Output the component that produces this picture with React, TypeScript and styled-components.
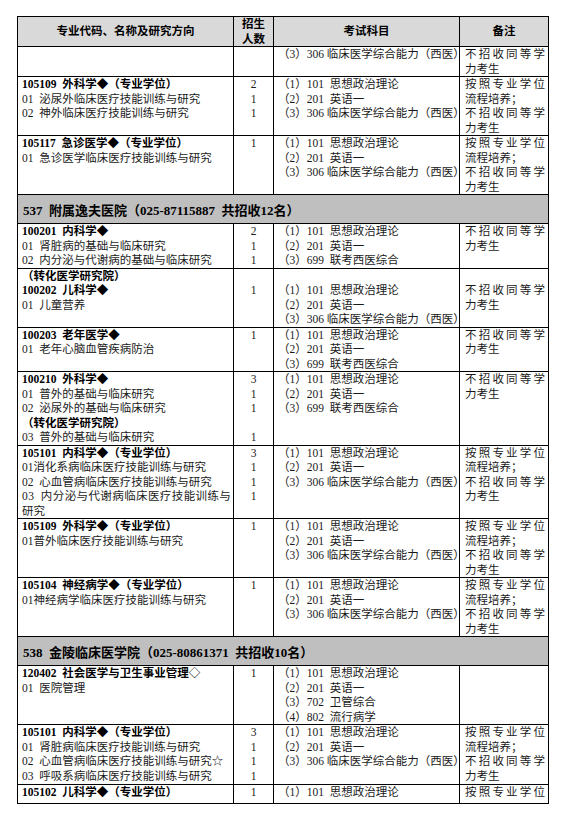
import React from "react";
import styled, { createGlobalStyle } from "styled-components";

const GlobalStyle = createGlobalStyle`
  body {
    margin: 0;
    background: #fff;
  }
`;

const Page = styled.div`
  padding: 16px 0 0 17px;
`;

const Sheet = styled.table`
  width: 531px;
  border-collapse: collapse;
  table-layout: fixed;
  font-family: "Liberation Serif", "Noto Sans CJK SC", serif;
  font-size: 11.5px;
  color: #1a1a1a;
`;

const Col = styled.col<{ $w: number }>`
  width: ${(p) => p.$w}px;
`;

const HeadCell = styled.th`
  background: #d9d9d9;
  border: 1px solid #000;
  height: 29px;
  padding: 0;
  font-weight: 700;
  line-height: 14.5px;
  text-align: center;
  vertical-align: middle;
  color: #000;
`;

const Cell = styled.td<{ $center?: boolean; $padL?: number; $padB?: number }>`
  border: 1px solid #000;
  padding: 0 3px ${(p) => p.$padB ?? 0}px ${(p) => p.$padL ?? 4}px;
  vertical-align: top;
  text-align: ${(p) => (p.$center ? "center" : "left")};
`;

const BandCell = styled.td`
  background: #bfbfbf;
  border: 1px solid #000;
  height: 28px;
  padding: 0 0 0 5px;
  font-size: 13px;
  font-weight: 700;
  color: #000;
  vertical-align: middle;
  white-space: pre;
`;

const Line = styled.div<{ $bold?: boolean; $spread?: boolean; $track?: number }>`
  height: 14.5px;
  line-height: 14.5px;
  white-space: ${(p) => (p.$spread ? "normal" : "pre")};
  font-weight: ${(p) => (p.$bold ? 700 : 400)};
  color: ${(p) => (p.$bold ? "#000" : "inherit")};
  letter-spacing: ${(p) => p.$track ?? 0}px;
  text-align: ${(p) => (p.$spread ? "justify" : "inherit")};
  text-align-last: ${(p) => (p.$spread ? "justify" : "auto")};
`;

const Mark = styled.span`
  font-weight: 400;
`;

type Txt = { t: string; b?: boolean; s?: boolean; k?: number; mark?: string };

type Entry = {
  left: Txt[];
  nums: string[];
  exams: string[];
  notes: Txt[];
  extra?: number;
};

type Item = { band: string } | Entry;

const NOTE_NO: Txt[] = [{ t: "不招收同等学", s: true }, { t: "力考生" }];
const NOTE_PRO: Txt[] = [
  { t: "按照专业学位", s: true },
  { t: "流程培养；" },
  ...NOTE_NO,
];

const E306 = [
  "（1）101  思想政治理论",
  "（2）201  英语一",
  "（3）306 临床医学综合能力（西医）",
];
const E699 = ["（1）101  思想政治理论", "（2）201  英语一", "（3）699  联考西医综合"];

const items: Item[] = [
  { left: [], nums: [], exams: [E306[2]], notes: NOTE_NO },
  {
    left: [
      { t: "105109  外科学◆（专业学位）", b: true },
      { t: "01  泌尿外临床医疗技能训练与研究" },
      { t: "02  神外临床医疗技能训练与研究" },
    ],
    nums: ["2", "1", "1"],
    exams: E306,
    notes: NOTE_PRO,
  },
  {
    left: [
      { t: "105117  急诊医学◆（专业学位）", b: true },
      { t: "01  急诊医学临床医疗技能训练与研究" },
    ],
    nums: ["1"],
    exams: E306,
    notes: NOTE_PRO,
  },
  { band: "537  附属逸夫医院（025-87115887  共招收12名）" },
  {
    left: [
      { t: "100201  内科学◆", b: true },
      { t: "01  肾脏病的基础与临床研究" },
      { t: "02  内分泌与代谢病的基础与临床研究" },
    ],
    nums: ["2", "1", "1"],
    exams: E699,
    notes: NOTE_NO,
  },
  {
    left: [
      { t: "（转化医学研究院）", b: true },
      { t: "100202  儿科学◆", b: true },
      { t: "01  儿童营养" },
    ],
    nums: ["", "1"],
    exams: ["", ...E306],
    notes: [{ t: "" }, ...NOTE_NO],
  },
  {
    left: [{ t: "100203  老年医学◆", b: true }, { t: "01  老年心脑血管疾病防治" }],
    nums: ["1"],
    exams: E699,
    notes: NOTE_NO,
  },
  {
    left: [
      { t: "100210  外科学◆", b: true },
      { t: "01  普外的基础与临床研究" },
      { t: "02  泌尿外的基础与临床研究" },
      { t: "（转化医学研究院）", b: true },
      { t: "03  普外的基础与临床研究" },
    ],
    nums: ["3", "1", "1", "", "1"],
    exams: E699,
    notes: NOTE_NO,
  },
  {
    left: [
      { t: "105101  内科学◆（专业学位）", b: true },
      { t: "01消化系病临床医疗技能训练与研究" },
      { t: "02  心血管病临床医疗技能训练与研究" },
      { t: "03  内分泌与代谢病临床医疗技能训练与", k: 0.4 },
      { t: "研究" },
    ],
    nums: ["3", "1", "1", "1"],
    exams: E306,
    notes: NOTE_PRO,
  },
  {
    left: [
      { t: "105109  外科学◆（专业学位）", b: true },
      { t: "01普外临床医疗技能训练与研究" },
    ],
    nums: ["1"],
    exams: E306,
    notes: NOTE_PRO,
  },
  {
    left: [
      { t: "105104  神经病学◆（专业学位）", b: true },
      { t: "01神经病学临床医疗技能训练与研究" },
    ],
    nums: ["1"],
    exams: E306,
    notes: NOTE_PRO,
  },
  { band: "538  金陵临床医学院（025-80861371  共招收10名）" },
  {
    left: [
      { t: "120402  社会医学与卫生事业管理", b: true, mark: "◇" },
      { t: "01  医院管理" },
    ],
    nums: ["1"],
    exams: [
      "（1）101  思想政治理论",
      "（2）201  英语一",
      "（3）702  卫管综合",
      "（4）802  流行病学",
    ],
    notes: [],
    extra: 3,
  },
  {
    left: [
      { t: "105101  内科学◆（专业学位）", b: true },
      { t: "01  肾脏病临床医疗技能训练与研究" },
      { t: "02  心血管病临床医疗技能训练与研究☆" },
      { t: "03  呼吸系病临床医疗技能训练与研究" },
    ],
    nums: ["3", "1", "1", "1"],
    exams: E306,
    notes: NOTE_PRO,
    extra: 1,
  },
  {
    left: [{ t: "105102  儿科学◆（专业学位）", b: true }],
    nums: ["1"],
    exams: [E306[0]],
    notes: [{ t: "按照专业学位", s: true }],
    extra: 3,
  },
];

const TextLine = ({ x }: { x: Txt }) => (
  <Line $bold={x.b} $spread={x.s} $track={x.k}>
    {x.t}
    {x.mark && <Mark>{x.mark}</Mark>}
  </Line>
);

export default function App() {
  return (
    <Page>
      <GlobalStyle />
      <Sheet>
        <colgroup>
          <Col $w={216} />
          <Col $w={40} />
          <Col $w={186} />
          <Col $w={89} />
        </colgroup>
        <thead>
          <tr>
            <HeadCell>专业代码、名称及研究方向</HeadCell>
            <HeadCell>
              招生
              <br />
              人数
            </HeadCell>
            <HeadCell>考试科目</HeadCell>
            <HeadCell>备注</HeadCell>
          </tr>
        </thead>
        <tbody>
          {items.map((it, i) =>
            "band" in it ? (
              <tr key={i}>
                <BandCell colSpan={4}>{it.band}</BandCell>
              </tr>
            ) : (
              <tr key={i}>
                <Cell $padB={it.extra}>
                  {it.left.map((x, j) => (
                    <TextLine key={j} x={x} />
                  ))}
                </Cell>
                <Cell $center $padL={3}>
                  {it.nums.map((n, j) => (
                    <Line key={j}>{n}</Line>
                  ))}
                </Cell>
                <Cell $padL={4}>
                  {it.exams.map((e, j) => (
                    <Line key={j}>{e}</Line>
                  ))}
                </Cell>
                <Cell $padL={5}>
                  {it.notes.map((x, j) => (
                    <TextLine key={j} x={x} />
                  ))}
                </Cell>
              </tr>
            )
          )}
        </tbody>
      </Sheet>
    </Page>
  );
}
